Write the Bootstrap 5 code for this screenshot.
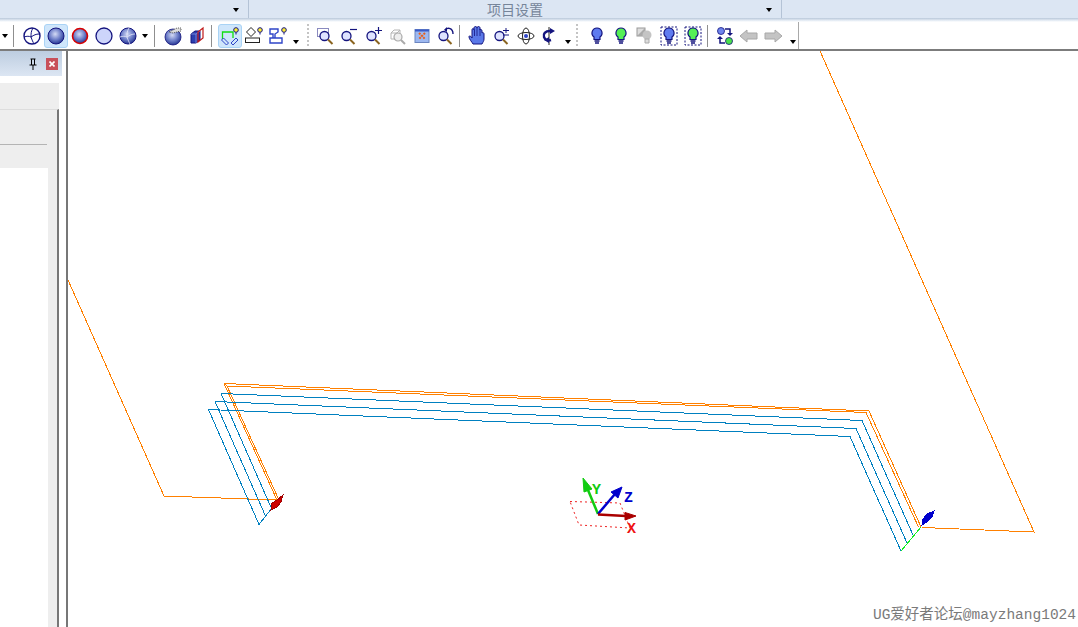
<!DOCTYPE html>
<html lang="zh">
<head>
<meta charset="UTF-8">
<meta name="viewport" content="width=device-width, initial-scale=1.0">
<title>项目设置</title>
<link href="https://cdn.jsdelivr.net/npm/bootstrap@5.3.0/dist/css/bootstrap.min.css" rel="stylesheet">
<style>
    body { width: 1078px; height: 627px; overflow: hidden; background: #fff; }
    .ribbon-bar { height: 18px; background: #dce6f3; }
    .ribbon-cell { height: 18px; position: relative; border-right: 1px solid #b4c3d6; }
    .ribbon-cell.c1 { width: 249px; }
    .ribbon-cell.c2 { width: 533px; }
    .ribbon-title { font: 14px/18px "Noto Sans CJK SC", sans-serif; color: #76859a; margin-left: 238px; }
    .ribbon-caret { position: absolute; right: 9px; top: 8px; }
    .caret-d { width: 0; height: 0; border: 3.5px solid transparent; border-top: 4px solid #000; border-bottom: 0; display: block; }
    .ribbon-shade { height: 4px; background: linear-gradient(#b9c8da, #e4ebf4 60%, #fff); }
    .tool-bar { height: 29px; border-bottom: 2px solid #7c7c7c; }
    .tool-row { width: 799px; height: 27px; border-right: 1px solid #a9a9a9; align-items: center; }
    .tb-btn { width: 24px; height: 24px; flex: none; display: flex; align-items: center; justify-content: center; }
    .tb-btn.on { background: #cfe6fb; border: 1px solid #a9d3f5; border-radius: 3px; }
    .tb-btn svg { width: 20px; height: 20px; display: block; }
    .tb-caret { flex: none; display: flex; justify-content: center; }
    .tb-sep { width: 1px; height: 22px; background: #8f8f8f; flex: none; }
    .tb-grip { width: 2px; height: 24px; flex: none; background: repeating-linear-gradient(#c4c4c4 0 2px, transparent 2px 4px); }
    .main-area { height: 576px; }
    .side-panel { width: 66px; flex: none; }
    .side-head { height: 25px; width: 62px; background: linear-gradient(#bdcde0, #dce6f3); gap: 8px; padding-right: 4px; }
    .side-x { width: 12px; height: 12px; background: #c8505a; color: #fff; display: flex; align-items: center; justify-content: center; }
    .side-body { height: 551px; padding-top: 7px; width: 59px; }
    .side-top { height: 26px; background: #eee; }
    .side-pane { flex: 1; background: #eee; border-top: 1px solid #ddd; border-right: 2px solid #777; }
    .side-form { height: 35px; width: 47px; border-bottom: 1px solid #b4b4b4; }
    .side-gap { height: 23px; }
    .side-white { flex: 1; width: 48px; background: #fff; }
    .view-area { border-left: 2px solid #777; }
    .view-area svg { display: block; }
    .view-mark { position: absolute; right: 2px; bottom: 2px; font: 14.5px/20px "Liberation Mono", "Noto Sans CJK SC", monospace; color: #7a7a7a; white-space: nowrap; }
    .axis-tag { font: bold 15px "Liberation Mono", monospace; }
</style>
</head>
<body>
<svg width="0" height="0" class="d-block">
    <defs>
        <radialGradient id="ball" cx="45%" cy="38%" r="65%">
            <stop offset="0" stop-color="#d4dbf5"/>
            <stop offset="0.55" stop-color="#6c7dc8"/>
            <stop offset="1" stop-color="#1f2f8c"/>
        </radialGradient>
        <g id="lens">
            <circle cx="7.500" cy="10" r="4.500" fill="#dfe3ff" stroke="#14147e" stroke-width="1.300"/>
            <path d="M11 13.500l4.500 4.500" stroke="#8a6420" stroke-width="2"/>
        </g>
        <g id="bulb">
            <path d="M10 2a5 5 0 0 1 3 9v2.500H7V11a5 5 0 0 1 3-9z" stroke="#14147e" stroke-width="1.200"/>
            <path d="M7.500 15h5M8 17h4" stroke="#14147e" stroke-width="1.300"/>
        </g>
        <g id="tip">
            <circle cx="16" cy="4" r="2.300" fill="#ffee33" stroke="#14147e"/>
            <path d="M16 6.500v2" stroke="#14147e"/>
        </g>
    </defs>
</svg>

<div class="ribbon-bar d-flex">
    <div class="ribbon-cell c1"><span class="ribbon-caret"><i class="caret-d"></i></span></div>
    <div class="ribbon-cell c2"><div class="ribbon-title">项目设置</div><span class="ribbon-caret"><i class="caret-d"></i></span></div>
</div>
<div class="ribbon-shade"></div>

<div class="tool-bar">
    <div class="tool-row d-flex" id="tools">
        <span class="tb-caret" style="width:9px"><i class="caret-d"></i></span>
        <span class="tb-sep ms-1" style="margin-right:6px"></span>
        <!-- view style group -->
        <div class="tb-btn"><svg viewBox="0 0 20 20"><circle cx="10" cy="10" r="8" fill="#fff" stroke="#14147e" stroke-width="1.400"/><path d="M2 11c3-1 5-1 7 0M9 11c0-3 0-6 2-9M9 11c3-2 5-3 8-3M9 11c1 3 2 5 3 7" fill="none" stroke="#14147e"/></svg></div>
        <div class="tb-btn on"><svg viewBox="0 0 20 20"><circle cx="10" cy="10" r="8" fill="url(#ball)" stroke="#14147e"/></svg></div>
        <div class="tb-btn"><svg viewBox="0 0 20 20"><circle cx="10" cy="10" r="7.500" fill="url(#ball)" stroke="#d80000" stroke-width="1.600"/></svg></div>
        <div class="tb-btn"><svg viewBox="0 0 20 20"><circle cx="10" cy="10" r="8" fill="#cdd5fb" stroke="#14147e" stroke-width="1.300"/></svg></div>
        <div class="tb-btn"><svg viewBox="0 0 20 20"><circle cx="10" cy="10" r="8" fill="url(#ball)" stroke="#14147e"/><path d="M2 11c3-1 5-1 7 0M9 11c0-3 0-6 2-9M9 11c3-2 5-3 8-3M9 11c1 3 2 5 3 7" fill="none" stroke="#e6e9fa" stroke-width=".8"/></svg></div>
        <span class="tb-caret" style="width:10px"><i class="caret-d"></i></span>
        <span class="tb-sep mx-1"></span>
        <div class="tb-btn" style="margin-left:2px"><svg viewBox="0 0 20 20"><circle cx="10" cy="11" r="8" fill="url(#ball)" stroke="#14147e" stroke-width=".8"/><path d="M6 6l8-4h4v3l-8 2z" fill="#ddd" stroke="#333" stroke-width=".8" stroke-dasharray="1 1"/></svg></div>
        <div class="tb-btn"><svg viewBox="0 0 20 20"><path d="M4 8l4-3h5v9l-4 3H4z" fill="#2b3fb0" stroke="#14147e"/><path d="M4 8h5v9M9 8l4-3" fill="none" stroke="#8795e0" stroke-width=".8"/><path d="M11 16V6l5-4v10z" fill="none" stroke="#c01818" stroke-width="1.200"/></svg></div>
        <span class="tb-sep" style="margin:0 6px 0 2px"></span>
        <div class="tb-btn on"><svg viewBox="0 0 20 20"><path d="M2.500 13V6h10.500v6" fill="none" stroke="#11dd11" stroke-width="1.300"/><path d="M1.500 14l2-2 5 5-2 2zM18 14l-2-2-5 5 2 2z" fill="none" stroke="#2f45c8"/><use href="#tip"/></svg></div>
        <div class="tb-btn"><svg viewBox="0 0 20 20"><path d="M7 1.500l4.500 4.500L7 10.500 2.500 6z" fill="#fff" stroke="#222"/><rect x="1.500" y="12" width="14" height="4.500" fill="#fff" stroke="#222"/><use href="#tip"/></svg></div>
        <div class="tb-btn"><svg viewBox="0 0 20 20"><path d="M2 3h8v3l-3 2v4h7v5H2v-5h3V8H2zM4 12h3" fill="none" stroke="#2f45c8" stroke-width="1.400"/><use href="#tip"/></svg></div>
        <span class="tb-caret" style="width:8px;padding-top:12px;margin-left:2px"><i class="caret-d"></i></span>
        <span class="tb-grip" style="margin:0 5px 0 7px"></span>
        <!-- zoom group -->
        <div class="tb-btn"><svg viewBox="0 0 20 20"><rect x="1.500" y="2.500" width="11" height="8" fill="none" stroke="#14147e" stroke-dasharray="1 1"/><use href="#lens" x="1"/></svg></div>
        <div class="tb-btn"><svg viewBox="0 0 20 20"><use href="#lens" x="-1"/><path d="M10 3.500h7" stroke="#14147e" stroke-width="1.200"/></svg></div>
        <div class="tb-btn"><svg viewBox="0 0 20 20"><use href="#lens"/><path d="M11 4.500h7M14.500 1v7" stroke="#14147e" stroke-width="1.200"/></svg></div>
        <div class="tb-btn"><svg viewBox="0 0 20 20"><path d="M3 7l3-3h6v6l-3 3H3zM3 7h6v6M9 7l3-3" fill="none" stroke="#b5b5b5"/><circle cx="10" cy="11" r="4" fill="#eee" stroke="#aaa" stroke-width="1.200"/><path d="M13 14l4 4" stroke="#aaa" stroke-width="2"/></svg></div>
        <div class="tb-btn"><svg viewBox="0 0 20 20"><rect x="3" y="3.500" width="14" height="13" fill="#9db8f0" stroke="#6b85c0"/><rect x="3" y="3.500" width="14" height="2" fill="#3a5bc8"/><path d="M7 7l6 6M13 7l-6 6" stroke="#e8601c" stroke-width="2" stroke-dasharray="2 1"/></svg></div>
        <div class="tb-btn"><svg viewBox="0 0 20 20"><use href="#lens"/><path d="M9 4c3-3 8-2 8 4" fill="none" stroke="#14147e" stroke-width="1.400"/><path d="M8 4l3-3v5z" fill="#14147e"/></svg></div>
        <span class="tb-sep" style="margin:0 6px 0 1px"></span>
        <div class="tb-btn"><svg viewBox="0 0 20 20"><path d="M5 18c-1-2-4-5-4-7s2-1 3 1V4c0-2 2-2 2 0V2c0-2 3-2 3 0v0c0-2 3-2 3 0v2c0-1 2-1 2 1v2c1-1 2 0 2 1v5c0 2-1 3-2 5z" fill="#5a78e8" stroke="#14147e"/><path d="M6.500 4v6M9 2v8M12 3v7" stroke="#14147e" fill="none" stroke-width=".8"/></svg></div>
        <div class="tb-btn"><svg viewBox="0 0 20 20"><use href="#lens"/><path d="M11 4.500h6M14 2v5M11 9h6" stroke="#14147e"/></svg></div>
        <div class="tb-btn"><svg viewBox="0 0 20 20"><ellipse cx="10" cy="10" rx="8" ry="3.500" fill="none" stroke="#222"/><ellipse cx="10" cy="10" rx="3.500" ry="8" fill="none" stroke="#222"/><circle cx="10" cy="10" r="2" fill="#2f45c8"/></svg></div>
        <div class="tb-btn"><svg viewBox="0 0 20 20"><path d="M9 1v18" stroke="#222"/><path d="M10 5c-5 0-7 3-6 6s4 4 7 3" fill="none" stroke="#14147e" stroke-width="2.400"/><path d="M10 2v6l5-3zM9 11v6l-5-3z" fill="#14147e"/></svg></div>
        <span class="tb-caret" style="width:12px;padding-top:12px"><i class="caret-d"></i></span>
        <span class="tb-grip" style="margin:0 7px 0 2px"></span>
        <!-- lights group -->
        <div class="tb-btn"><svg viewBox="0 0 20 20"><use href="#bulb" fill="#5f7bf0"/></svg></div>
        <div class="tb-btn"><svg viewBox="0 0 20 20"><use href="#bulb" fill="#55f055"/></svg></div>
        <div class="tb-btn"><svg viewBox="0 0 20 20"><rect x="2" y="2" width="8" height="8" fill="#ddd" stroke="#999"/><path d="M2 10l8-8v8z" fill="#aaa"/><circle cx="12" cy="9" r="4.500" fill="#c4c4c4"/><path d="M10 13h4v4h-4z" fill="#ddd" stroke="#aaa"/></svg></div>
        <div class="tb-btn"><svg viewBox="0 0 20 20"><rect x="2" y="1" width="16" height="18" fill="none" stroke="#14147e" stroke-dasharray="2 1.500"/><use href="#bulb" fill="#5f7bf0"/></svg></div>
        <div class="tb-btn"><svg viewBox="0 0 20 20"><rect x="2" y="1" width="16" height="18" fill="none" stroke="#14147e" stroke-dasharray="2 1.500"/><use href="#bulb" fill="#55f055"/></svg></div>
        <span class="tb-sep" style="margin:0 5px 0 2px"></span>
        <div class="tb-btn"><svg viewBox="0 0 20 20"><circle cx="6" cy="5" r="3.500" fill="#6f86ee" stroke="#14147e" stroke-width=".8"/><circle cx="14" cy="15" r="3.500" fill="#4be04b" stroke="#14147e" stroke-width=".8"/><path d="M10 3h5v4" fill="none" stroke="#14147e" stroke-width="1.500"/><path d="M12 7h6l-3 3z" fill="#14147e"/><path d="M10 17H5v-4" fill="none" stroke="#14147e" stroke-width="1.500"/><path d="M2 13h6l-3-3z" fill="#14147e"/></svg></div>
        <div class="tb-btn"><svg viewBox="0 0 20 20"><path d="M1 10l7-6v3h10v6H8v3z" fill="#c4c4c4" stroke="#a8a8a8"/></svg></div>
        <div class="tb-btn"><svg viewBox="0 0 20 20"><path d="M19 10l-7-6v3H2v6h10v3z" fill="#c4c4c4" stroke="#a8a8a8"/></svg></div>
        <span class="tb-caret ms-1" style="width:8px;padding-top:12px"><i class="caret-d"></i></span>
    </div>
</div>

<div class="main-area d-flex">
    <aside class="side-panel">
        <div class="side-head d-flex align-items-center justify-content-end">
            <svg width="10" height="12" viewBox="0 0 10 12"><path d="M2.500 1h5M3.500 1v6M6.500 1v6M1.500 7h7M5 7v5" stroke="#000" fill="none"/></svg>
            <span class="side-x"><svg width="6" height="6" viewBox="0 0 6 6"><path d="M0.500 0.500l5 5M5.500 0.500l-5 5" stroke="#fff" stroke-width="1.600"/></svg></span>
        </div>
        <div class="side-body d-flex flex-column">
            <div class="side-top"></div>
            <div class="side-pane d-flex flex-column">
                <div class="side-form"></div>
                <div class="side-gap"></div>
                <div class="side-white"></div>
            </div>
        </div>
    </aside>
    <div class="view-area flex-grow-1 position-relative">
        <svg width="1010" height="576" viewBox="68 51 1010 576" fill="none">
            <g stroke="#ff8000" shape-rendering="crispEdges">
                <path d="M820 51L1034 532L922 527.500"/>
                <path d="M68 280L164 496L277 500"/>
                <path d="M224 383.500L869 411L921 527"/>
                <path d="M224 383.500L227 386L866 412.500L918.500 527"/>
                <path d="M224 383.500L277 500M227 386L279 500"/>
            </g>
            <g stroke="#0080c0" shape-rendering="crispEdges">
                <path d="M221 393.500L862 420.500L913 535"/>
                <path d="M215 401.500L856 428.500L907 543"/>
                <path d="M208.500 409.500L850 436.500L901 551"/>
                <path d="M221 393.500L271.500 508.500M215 401.500L265.500 516M208.500 409.500L259 524.500L271.500 508.500"/>
            </g>
            <path d="M901 551L921 527" stroke="#11ee22" shape-rendering="crispEdges"/>
            <!-- end markers -->
            <path d="M271 510L272 503L277 500L283 495L281 502L277 507z" fill="#cc0000" stroke="#a00000" shape-rendering="crispEdges"/>
            <path d="M922 525L923 519L927 514L934 511L932 517L928 521z" fill="#0000cc" stroke="#0000cc" shape-rendering="crispEdges"/>
            <!-- triad -->
            <path d="M570 501.500L620 503L630 528L579 525z" stroke="#ee2222" stroke-dasharray="2 3"/>
            <path d="M598 514L588 490" stroke="#11cc11" stroke-width="2.500"/>
            <path d="M583 478L592 489L584 492z" fill="#11cc11" stroke="#11cc11"/>
            <path d="M598 514L615 494" stroke="#0000cc" stroke-width="2.500"/>
            <path d="M622 487L618 498L611 492z" fill="#0000cc" stroke="#0000cc"/>
            <path d="M598 514.500L626 516" stroke="#aa0000" stroke-width="2.500"/>
            <path d="M636 516L625 512.500V520z" fill="#aa0000" stroke="#aa0000"/>
            <text class="axis-tag" x="592" y="494" fill="#11cc11">Y</text>
            <text class="axis-tag" x="624" y="502" fill="#0000cc">Z</text>
            <text class="axis-tag" x="627" y="533" fill="#ee1111">X</text>
        </svg>
        <span class="view-mark">UG爱好者论坛@mayzhang1024</span>
    </div>
</div>
</body>
</html>
